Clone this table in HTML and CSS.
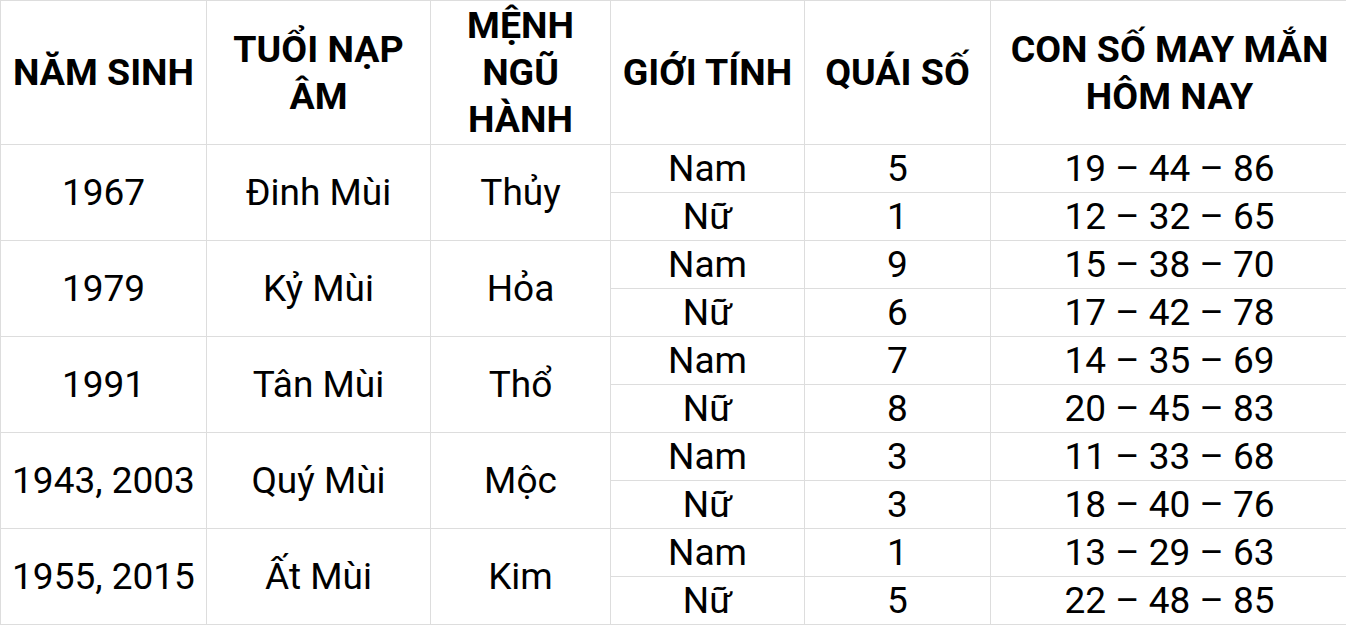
FILE: index.html
```html
<!DOCTYPE html>
<html lang="vi">
<head>
<meta charset="utf-8">
<title>Con số may mắn</title>
<link rel="stylesheet" href="styles.css">
</head>
<body>
<table class="lucky">
  <colgroup>
    <col class="c1"><col class="c2"><col class="c3"><col class="c4"><col class="c5"><col class="c6">
  </colgroup>
  <thead>
    <tr class="head">
      <th>NĂM SINH</th>
      <th>TUỔI NẠP ÂM</th>
      <th>MỆNH NGŨ HÀNH</th>
      <th>GIỚI TÍNH</th>
      <th>QUÁI SỐ</th>
      <th>CON SỐ MAY MẮN HÔM NAY</th>
    </tr>
  </thead>
  <tbody>
    <tr><td rowspan="2">1967</td><td rowspan="2">Đinh Mùi</td><td rowspan="2">Thủy</td><td>Nam</td><td>5</td><td>19 – 44 – 86</td></tr>
    <tr><td>Nữ</td><td>1</td><td>12 – 32 – 65</td></tr>
    <tr><td rowspan="2">1979</td><td rowspan="2">Kỷ Mùi</td><td rowspan="2">Hỏa</td><td>Nam</td><td>9</td><td>15 – 38 – 70</td></tr>
    <tr><td>Nữ</td><td>6</td><td>17 – 42 – 78</td></tr>
    <tr><td rowspan="2">1991</td><td rowspan="2">Tân Mùi</td><td rowspan="2">Thổ</td><td>Nam</td><td>7</td><td>14 – 35 – 69</td></tr>
    <tr><td>Nữ</td><td>8</td><td>20 – 45 – 83</td></tr>
    <tr><td rowspan="2">1943, 2003</td><td rowspan="2">Quý Mùi</td><td rowspan="2">Mộc</td><td>Nam</td><td>3</td><td>11 – 33 – 68</td></tr>
    <tr><td>Nữ</td><td>3</td><td>18 – 40 – 76</td></tr>
    <tr><td rowspan="2">1955, 2015</td><td rowspan="2">Ất Mùi</td><td rowspan="2">Kim</td><td>Nam</td><td>1</td><td>13 – 29 – 63</td></tr>
    <tr><td>Nữ</td><td>5</td><td>22 – 48 – 85</td></tr>
  </tbody>
</table>
</body>
</html>
```
FILE: styles.css
```css
html, body {
  margin: 0;
  padding: 0;
  background: #fff;
  overflow: hidden;
}
.lucky {
  border-collapse: collapse;
  table-layout: fixed;
  width: 1348px;
  font-family: Roboto, "Liberation Sans", sans-serif;
  color: #000;
}
.c1 { width: 206px; }
.c2 { width: 224px; }
.c3 { width: 180px; }
.c4 { width: 194px; }
.c5 { width: 186px; }
.c6 { width: 358px; }
.lucky th, .lucky td {
  border: 1px solid #dddddd;
  text-align: center;
  vertical-align: middle;
  padding: 0 4px;
}
.lucky th {
  font-weight: 700;
  font-size: 37.5px;
  line-height: 47px;
  height: 144px;
  box-sizing: border-box;
}
.lucky td {
  font-size: 37px;
  line-height: 40px;
  height: 48px;
  box-sizing: border-box;
}
```
